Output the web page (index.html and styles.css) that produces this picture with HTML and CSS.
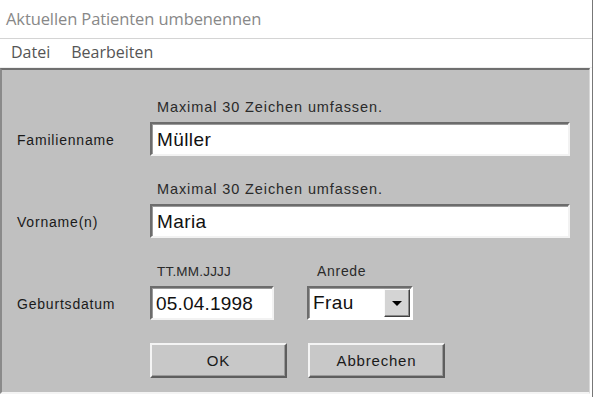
FILE: index.html
```html
<!DOCTYPE html>
<html lang="de">
<head>
    <meta charset="UTF-8">
    <meta name="viewport" content="width=device-width, initial-scale=1.0">
    <title>Aktuellen Patienten umbenennen</title>
<link rel="stylesheet" href="styles.css">
</head>
<body>
<div class="window">
    <div class="titlebar">Aktuellen Patienten umbenennen</div>
    <div class="menubar">
        <span class="menu-item">Datei</span>
        <span class="menu-item">Bearbeiten</span>
    </div>
    <div class="panel">
        <div class="group">
            <span class="hint">Maximal 30 Zeichen umfassen.</span>
            <label class="label">Familienname</label>
            <div class="field wide">Müller</div>
        </div>
        <div class="group">
            <span class="hint">Maximal 30 Zeichen umfassen.</span>
            <label class="label">Vorname(n)</label>
            <div class="field wide">Maria</div>
        </div>
        <div class="group">
            <div class="hints">
                <span class="hint date-hint">TT.MM.JJJJ</span>
                <span class="hint salut-hint">Anrede</span>
            </div>
            <label class="label">Geburtsdatum</label>
            <div class="fields">
                <div class="field date">05.04.1998</div>
                <div class="field select">
                    <span class="select-val">Frau</span>
                    <span class="select-btn"><i class="arrow"></i></span>
                </div>
            </div>
        </div>
        <div class="buttons">
            <button class="btn">OK</button>
            <button class="btn">Abbrechen</button>
        </div>
    </div>
</div>
</body>
</html>
```

FILE: styles.css
```css
* {box-sizing: border-box;}
body {margin: 0; background: #fff;}
.window {width: 593px; height: 397px; border-right: 1px solid #777; background: #fff;}

.titlebar {height: 39px; padding: 7px 0 0 6px; border-bottom: 1px solid #d4d4d4; font-family: 'Open Sans', sans-serif; font-size: 16.5px; color: #888; letter-spacing: -0.1px;}
.menubar {display: flex; gap: 21px; height: 29px; padding: 2px 0 0 11px; font-family: 'Open Sans', sans-serif; font-size: 16px; color: #555; border-bottom: 1px solid #eee;}

.panel {height: 326px; width: 590px; background: #c0c0c0; border-top: 2px solid #6f6f6f; border-left: 2px solid #8a8a8a; border-right: 1px solid #d8d8d8; border-bottom: 2px solid #f4f4f4; padding: 30px 0 0 15px; font-family: 'Liberation Sans', Arial, sans-serif; color: #1a1a1a;}

.group {display: grid; grid-template-columns: 133px auto; grid-template-rows: auto auto; margin-bottom: 26px;}
.hint {grid-column: 2; padding-left: 7px; font-size: 14.5px; line-height: 15px; letter-spacing: 0.9px; color: #2a2a2a; margin-bottom: 7px;}
.hints {grid-column: 2; display: flex; margin-bottom: 7px;}
.hints .hint {margin-bottom: 0;}
.date-hint {width: 157px; font-size: 13.5px; letter-spacing: 0.2px;}
.salut-hint {padding-left: 10px; font-size: 14px; letter-spacing: 0.7px;}
.label {grid-row: 2; grid-column: 1; align-self: center; font-size: 14px; letter-spacing: 0.8px; padding-top: 2px;}

.field {height: 34px; background: #fff; border-top: 2px solid #6c6c6c; border-left: 2px solid #6c6c6c; border-right: 2px solid #f2f2f2; border-bottom: 2px solid #f2f2f2; box-shadow: inset 1px 1px 0 #9a9a9a; padding: 5px 0 0 5px; font-size: 19px; letter-spacing: 0.4px; color: #111;}
.wide {grid-column: 2; width: 420px;}
.fields {grid-column: 2; display: flex; gap: 33px;}
.date {width: 124px; padding-left: 4px; letter-spacing: 0.2px;}
.select {display: flex; width: 106px; padding: 0; border-right-color: #fff; border-bottom-color: #fff;}
.select-val {flex: 1; padding: 4px 0 0 4px;}
.select-btn {width: 26px; height: 28px; margin: 1px 1px 0 0; background: #d4d4d4; border-top: 1px solid #fafafa; border-left: 1px solid #fafafa; border-right: 1px solid #404040; border-bottom: 1px solid #404040; box-shadow: inset -1px -1px 0 #8a8a8a; display: flex; align-items: center; justify-content: center;}
.arrow {width: 0; height: 0; border-left: 5px solid transparent; border-right: 5px solid transparent; border-top: 5px solid #000;}

.buttons {display: flex; gap: 21px; padding-left: 133px; margin-top: -3px;}
.btn {width: 137px; height: 35px; background: #c8c8c8; border-top: 2px solid #f4f4f4; border-left: 2px solid #f4f4f4; border-right: 2px solid #5e5e5e; border-bottom: 2px solid #5e5e5e; box-shadow: inset -1px -1px 0 #9a9a9a; font-family: 'Liberation Sans', Arial, sans-serif; font-size: 15px; letter-spacing: 0.8px; color: #1a1a1a; padding: 0;}
```
